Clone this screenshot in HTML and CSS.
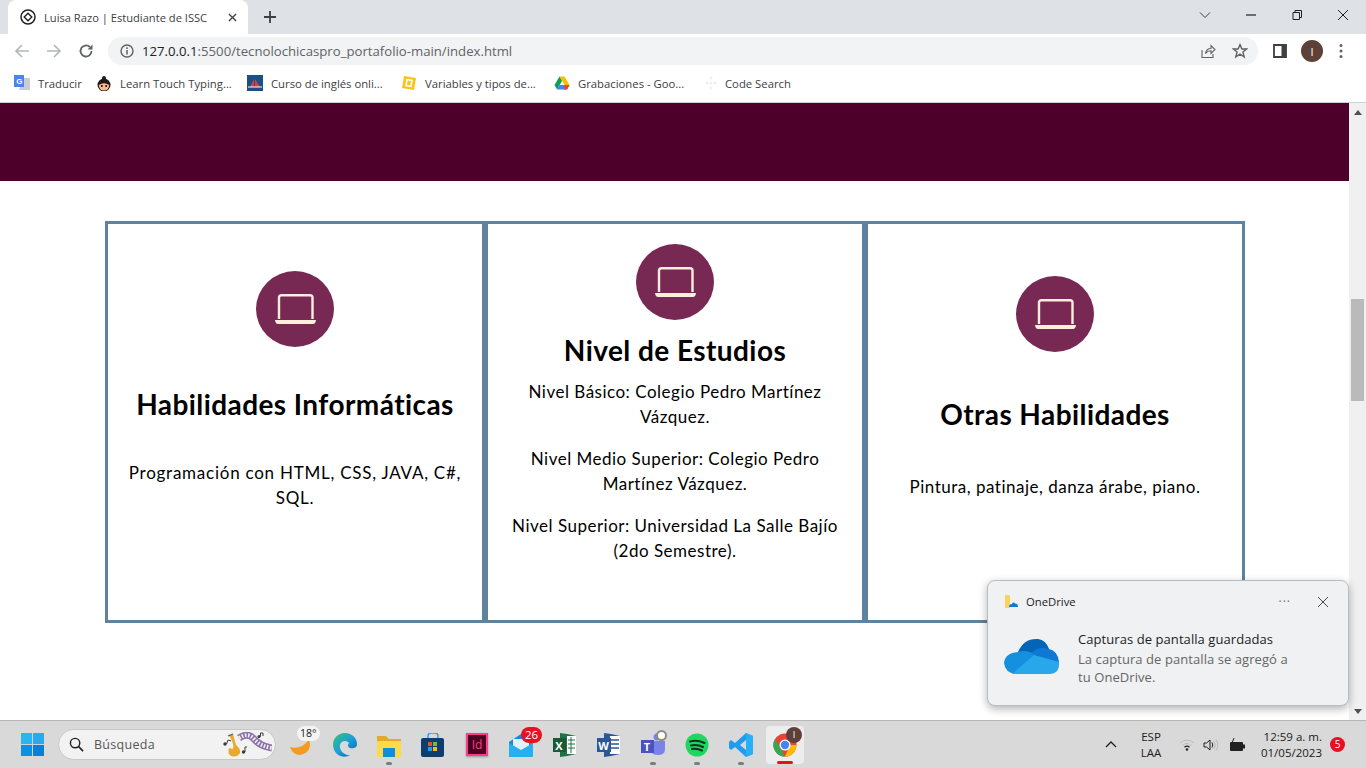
FILE: index.html
```html
<!DOCTYPE html>
<html lang="es">
<head>
<meta charset="utf-8">
<title>Luisa Razo | Estudiante de ISSC</title>
<link rel="stylesheet" href="styles.css">
</head>
<body>
<div class="tabstrip">
  <div class="tab">
    <svg class="tab-icon" viewBox="0 0 16 16"><circle cx="8" cy="8" r="7" fill="none" stroke="#202124" stroke-width="1.5"/><path d="M8 4.2 11.8 8 8 11.8 4.2 8Z" fill="none" stroke="#202124" stroke-width="1.4"/></svg>
    <span class="tab-title">Luisa Razo | Estudiante de ISSC</span>
    <svg class="tab-close" viewBox="0 0 10 10"><path d="M1 1 9 9M9 1 1 9" stroke="#45484c" stroke-width="1.6"/></svg>
  </div>
  <svg class="new-tab" viewBox="0 0 12 12"><path d="M6 0V12M0 6H12" stroke="#3c4043" stroke-width="1.8"/></svg>
  <div class="win-controls">
    <svg class="win-btn" viewBox="0 0 12 12"><path d="M1 3.5 6 8.5 11 3.5" fill="none" stroke="#3c4043" stroke-width="1"/></svg>
    <svg class="win-btn" viewBox="0 0 12 12"><path d="M1 6H11" stroke="#202124" stroke-width="1.2"/></svg>
    <svg class="win-btn" viewBox="0 0 12 12"><path d="M2 3.5H8.5V10.5H2ZM4 3.5V1.5H10.5V8.5H8.5" fill="none" stroke="#202124" stroke-width="1"/></svg>
    <svg class="win-btn" viewBox="0 0 12 12"><path d="M1 1 11 11M11 1 1 11" stroke="#202124" stroke-width="1"/></svg>
  </div>
</div>

<div class="toolbar">
  <svg class="nav-icon" viewBox="0 0 16 16"><path d="M15 8H2M8 2 2 8 8 14" fill="none" stroke="#b4b6b9" stroke-width="1.7"/></svg>
  <svg class="nav-icon" viewBox="0 0 16 16"><path d="M1 8H14M8 2 14 8 8 14" fill="none" stroke="#b4b6b9" stroke-width="1.7"/></svg>
  <svg class="nav-icon" viewBox="0 0 16 16"><path d="M13.5 8A5.5 5.5 0 1 1 11.8 4" fill="none" stroke="#5f6368" stroke-width="1.8"/><path d="M14.5 1.5V6.5H9.5Z" fill="#5f6368"/></svg>
  <div class="omnibox">
    <svg class="info-icon" viewBox="0 0 14 14"><circle cx="7" cy="7" r="6" fill="none" stroke="#5f6368" stroke-width="1.4"/><path d="M7 6V10.5M7 3.3V5" stroke="#5f6368" stroke-width="1.5"/></svg>
    <span class="url"><span class="url-host">127.0.0.1</span>:5500/tecnolochicaspro_portafolio-main/index.html</span>
    <svg class="omni-action" viewBox="0 0 16 16"><path d="M2 7V14.5H13V11M5.5 10.5C6 7.5 8 5.5 11 5.5V2.5L15 6.5 11 10.5V7.8C8.5 7.8 7 8.6 5.5 10.5Z" fill="none" stroke="#5f6368" stroke-width="1.1"/></svg>
    <svg class="omni-action star" viewBox="0 0 16 16"><path d="M8 1.6 9.9 6H14.7L10.9 9 12.2 14 8 11.2 3.8 14 5.1 9 1.3 6H6.1Z" fill="none" stroke="#5f6368" stroke-width="1.4"/></svg>
  </div>
  <svg class="side-panel" viewBox="0 0 14 14"><path d="M1 1H13V13H1Z" fill="none" stroke="#3c4043" stroke-width="1.8"/><rect x="8.5" y="1" width="4.5" height="12" fill="#3c4043"/></svg>
  <div class="avatar">I</div>
  <svg class="menu-dots" viewBox="0 0 4 16"><circle cx="2" cy="2.5" r="1.5" fill="#5f6368"/><circle cx="2" cy="8" r="1.5" fill="#5f6368"/><circle cx="2" cy="13.5" r="1.5" fill="#5f6368"/></svg>
</div>

<div class="bookmarks">
  <a class="bookmark bm-translate">
    <svg class="bm-icon" viewBox="0 0 16 16"><path d="M9 3H16V15H5Z" fill="#c9ccd1"/><rect width="10" height="12" fill="#4a86e8"/><text x="2.2" y="9" class="bm-g">G</text></svg>
    <span>Traducir</span></a>
  <a class="bookmark bm-learn">
    <svg class="bm-icon" viewBox="0 0 16 16"><circle cx="8" cy="3" r="2" fill="#1f1a17"/><circle cx="8" cy="10" r="6.5" fill="#1f1a17"/><path d="M2.8 10Q8 6.5 13.2 10 13 15.5 8 15.500 3 15.5 2.8 10Z" fill="#f5b98e"/><circle cx="5.8" cy="11" r=".9"/><circle cx="10.2" cy="11" r=".9"/></svg>
    <span>Learn Touch Typing...</span></a>
  <a class="bookmark bm-curso">
    <svg class="bm-icon" viewBox="0 0 16 16"><rect width="16" height="16" fill="#1b4f86"/><path d="M3 12 7 4V12ZM8 4 13 12H8Z" fill="#d8413f"/><path d="M1 12H15" stroke="#fff" stroke-width="1"/></svg>
    <span>Curso de inglés onli...</span></a>
  <a class="bookmark bm-vars">
    <svg class="bm-icon" viewBox="0 0 16 16"><path d="M3 1 15 3 13 15 1 13Z" fill="#fcc419"/><rect x="5.5" y="5" width="5" height="6" fill="none" stroke="#fff" stroke-width="1.6" transform="rotate(9 8 8)"/></svg>
    <span>Variables y tipos de...</span></a>
  <a class="bookmark bm-drive">
    <svg class="bm-icon" viewBox="0 0 16 16"><path d="M5.5 1.5H10.5L15.5 10H10.5Z" fill="#fbbc04"/><path d="M5.5 1.5 0.5 10 3 14.5 8 6Z" fill="#0f9d58"/><path d="M3 14.5H13L15.5 10H5.5Z" fill="#4285f4"/><path d="M10.5 10 15.5 10 13 14.5 10 14.5Z" fill="#ea4335"/></svg>
    <span>Grabaciones - Goo...</span></a>
  <a class="bookmark bm-code">
    <svg class="bm-icon" viewBox="0 0 16 16"><circle cx="8" cy="3" r="1.5" fill="#f0f0f0"/><circle cx="4" cy="8" r="1.5" fill="#f0f0f0"/><circle cx="12" cy="8" r="1.5" fill="#f0f0f0"/><circle cx="8" cy="13" r="1.5" fill="#f0f0f0"/><circle cx="8" cy="8" r="1.5" fill="#f0f0f0"/></svg>
    <span>Code Search</span></a>
</div>

<div class="viewport">
  <main class="page">
    <div class="banner"></div>
    <section class="cards">
      <article class="card card-skills">
        <div class="badge"><svg class="laptop" viewBox="0 0 41 30"><path d="M4 25V3.5Q4 1.200 6.500 1.200H35Q37.500 1.200 37.500 3.500V25" fill="none" stroke="#fdeedd" stroke-width="2.400"/><path d="M0 26H41Q40.500 30 38 30H3Q.5 30 0 26Z" fill="#fdeedd"/></svg></div>
        <h2 class="card-title">Habilidades Informáticas</h2>
        <p class="card-text">Programación con HTML, CSS, JAVA, C#, SQL.</p>
      </article>
      <article class="card card-studies">
        <div class="badge"><svg class="laptop" viewBox="0 0 41 30"><path d="M4 25V3.5Q4 1.200 6.500 1.200H35Q37.500 1.200 37.500 3.500V25" fill="none" stroke="#fdeedd" stroke-width="2.400"/><path d="M0 26H41Q40.500 30 38 30H3Q.5 30 0 26Z" fill="#fdeedd"/></svg></div>
        <h2 class="card-title">Nivel de Estudios</h2>
        <p class="card-text">Nivel Básico: Colegio Pedro Martínez Vázquez.</p>
        <p class="card-text">Nivel Medio Superior: Colegio Pedro Martínez Vázquez.</p>
        <p class="card-text">Nivel Superior: Universidad La Salle Bajío (2do Semestre).</p>
      </article>
      <article class="card card-other">
        <div class="badge"><svg class="laptop" viewBox="0 0 41 30"><path d="M4 25V3.5Q4 1.200 6.500 1.200H35Q37.500 1.200 37.500 3.500V25" fill="none" stroke="#fdeedd" stroke-width="2.400"/><path d="M0 26H41Q40.500 30 38 30H3Q.5 30 0 26Z" fill="#fdeedd"/></svg></div>
        <h2 class="card-title">Otras Habilidades</h2>
        <p class="card-text">Pintura, patinaje, danza árabe, piano.</p>
      </article>
    </section>
  </main>
  <div class="scrollbar">
    <svg class="scroll-arrow" viewBox="0 0 8 5"><path d="M0 5 4 0 8 5Z" fill="#505050"/></svg>
    <div class="scroll-thumb"></div>
    <svg class="scroll-arrow" viewBox="0 0 8 5"><path d="M0 0 4 5 8 0Z" fill="#505050"/></svg>
  </div>
</div>

<aside class="toast">
  <header class="toast-head">
    <svg class="toast-app" viewBox="0 0 14 14"><path d="M1 0H5L6 1V13H1Z" fill="#fbd35c"/><path d="M5 12Q5 9 8 9 9 6.500 11 8.500 14 8.500 14 12Z" fill="#0f78d4"/></svg>
    <span class="toast-app-name">OneDrive</span>
    <span class="toast-more">···</span>
    <svg class="toast-close" viewBox="0 0 10 10"><path d="M0 0 10 10M10 0 0 10" stroke="#4a4a4a" stroke-width="1"/></svg>
  </header>
  <div class="toast-body">
    <svg class="cloud" viewBox="0 0 56 38"><path d="M14 14Q20 0 34 1 42 2 45 11L30 26Z" fill="#0364b8"/><path d="M45 11Q54 13 55 24L38 24 26 15 33 11Q39 9 45 11Z" fill="#0f78d4"/><path d="M14 14Q24 11 30 17L38 23 12 36Q1 35 0 25 1 15 14 14Z" fill="#1490df"/><path d="M8 36 30 17 55 24Q56 36 46 36Z" fill="#28a8ea"/></svg>
    <div class="toast-copy">
      <div class="toast-title">Capturas de pantalla guardadas</div>
      <div class="toast-msg">La captura de pantalla se agregó a<br>tu OneDrive.</div>
    </div>
  </div>
</aside>

<footer class="taskbar">
  <svg class="start" viewBox="0 0 24 24"><rect width="11.500" height="11.500" fill="#29b6f0"/><rect x="12.500" width="11.500" height="11.500" fill="#29a9ee"/><rect y="12.500" width="11.500" height="11.500" fill="#0f8fe0"/><rect x="12.500" y="12.500" width="11.500" height="11.500" fill="#0b7fd6"/></svg>
  <div class="search">
    <svg class="search-icon" viewBox="0 0 16 16"><circle cx="6.500" cy="6.500" r="5" fill="none" stroke="#202020" stroke-width="1.5"/><path d="M10 10 15 15" stroke="#202020" stroke-width="1.700"/></svg>
    <span class="search-label">Búsqueda</span>
    <svg class="search-art" viewBox="0 0 50 26"><path d="M7 3 11 2 14 13Q19 17 18 21 15 26 9 24 5 21 7 16L11 17Q12 14 10.500 10Z" fill="#e8a92f"/><path d="M6 4 11 2" stroke="#555" stroke-width="1.200"/><path d="M17 6Q26 0 32 7 38 14 50 16" fill="none" stroke="#8a75a6" stroke-width="7"/><path d="M17 6Q26 0 32 7 38 14 50 16" fill="none" stroke="#f3eef8" stroke-width="4" stroke-dasharray="1.600 1.600"/><circle cx="3" cy="12" r="1.700" fill="#3a3a3a"/><path d="M4.500 12 6 8 9 9" fill="none" stroke="#3a3a3a"/><circle cx="21.500" cy="20" r="1.700" fill="#3a3a3a"/><path d="M23 20V15H25" fill="none" stroke="#3a3a3a"/><circle cx="37" cy="4.500" r="1.500" fill="#3a3a3a"/><path d="M38.500 4.500V1H41V4" fill="none" stroke="#3a3a3a"/></svg>
  </div>
  <div class="task-apps">
    <div class="app app-weather">
      <svg class="app-icon" viewBox="0 0 24 24"><path d="M1 14Q7 16 13 13 18 10 20 6 24 19 11 22 4 22 1 14Z" fill="#f39a1f"/></svg>
      <span class="weather-temp">18°</span>
    </div>
    <div class="app">
      <svg class="app-icon" viewBox="0 0 24 24"><defs><linearGradient id="edgeFill" x1="0" y1="0" x2="1" y2="1"><stop offset="0" stop-color="#35c36f"/><stop offset=".5" stop-color="#1d9fd8"/><stop offset="1" stop-color="#0c5fb2"/></linearGradient></defs><path d="M12 0C19 0 24 5 24 11 24 15 20 16 17 15 14 14 15 11 16 10 14 7 8 7 7 12 6 18 12 23 17 22 13 25 1 25 0 12 0 5 5 0 12 0Z" fill="url(#edgeFill)"/></svg>
    </div>
    <div class="app app-open">
      <svg class="app-icon" viewBox="0 0 24 24"><path d="M0 3H9L12 6H24V8H0Z" fill="#e3a92b"/><path d="M0 8H24V24H0Z" fill="#fdd94e"/><rect x="6" y="15" width="12" height="9" fill="#0f8edb"/></svg>
      <span class="run-dot"></span>
    </div>
    <div class="app">
      <svg class="app-icon" viewBox="0 0 24 24"><path d="M7 6V3Q7 0 10 0H14Q17 0 17 3V6" fill="none" stroke="#29a4e8" stroke-width="1.500"/><rect y="5" width="23" height="19" rx="2" fill="#0c3f70"/><rect x="7" y="9" width="4" height="4" fill="#e8512b"/><rect x="12" y="9" width="4" height="4" fill="#7fba2a"/><rect x="7" y="14" width="4" height="4" fill="#1ea0e8"/><rect x="12" y="14" width="4" height="4" fill="#fcb912"/></svg>
    </div>
    <div class="app">
      <div class="indesign"><span class="indesign-text">Id</span></div>
    </div>
    <div class="app">
      <svg class="app-icon" viewBox="0 0 24 24"><path d="M0 9 12 1 24 9V24H0Z" fill="#1a8ad6"/><path d="M4 6H20V16L12 20 4 16Z" fill="#dff2fd"/><path d="M0 10 12 17 24 10V24H0Z" fill="#29aef0"/></svg>
      <span class="count-badge">26</span>
    </div>
    <div class="app">
      <svg class="app-icon" viewBox="0 0 24 24"><path d="M7 0 14 1 23 3V21L14 23 7 24Z" fill="#1f7244"/><path d="M14 3H23V21H14Z" fill="#fff"/><path d="M15 7H22M15 11H22M15 15H22M18 4V20" stroke="#1f7244" stroke-width="1"/><rect y="5" width="13" height="14" fill="#185c37"/><text x="2.300" y="16.500" class="office-letter">X</text></svg>
    </div>
    <div class="app">
      <svg class="app-icon" viewBox="0 0 24 24"><path d="M7 0 14 1 23 3V21L14 23 7 24Z" fill="#2b579a"/><path d="M13 3H23V21H13Z" fill="#fff"/><path d="M14 7H22M14 11H22M14 15H22" stroke="#2b579a" stroke-width="1.300"/><rect y="5" width="14" height="14" fill="#2b579a"/><text x="1.300" y="16.500" class="office-letter">W</text></svg>
    </div>
    <div class="app app-open">
      <svg class="app-icon" viewBox="0 0 24 24"><circle cx="16" cy="4" r="3.500" fill="#7b83eb"/><path d="M9 8H24V16Q24 22 17 22 10 22 9 16Z" fill="#7b83eb"/><rect y="7" width="13" height="13" fill="#4b53bc"/><text x="2.800" y="17.500" class="office-letter">T</text></svg>
      <span class="presence"></span>
      <span class="run-dot"></span>
    </div>
    <div class="app app-open">
      <svg class="app-icon" viewBox="0 0 24 24"><circle cx="12" cy="12" r="11.500" fill="#1ed760"/><path d="M5 8.500Q12 6.500 19.500 10M6 12.500Q12 11 18 14M7 16Q12 15 17 17.500" fill="none" stroke="#17301f" stroke-width="2" stroke-linecap="round"/></svg>
      <span class="run-dot"></span>
    </div>
    <div class="app app-open">
      <svg class="app-icon" viewBox="0 0 24 24"><path d="M17 0 24 3V21L17 24 6 14 2 17 0 15V9L2 7 6 10ZM17 7 11 12 17 17Z" fill="#1f9cf0"/><path d="M17 0 24 3V21L17 24Z" fill="#27b0f5"/></svg>
      <span class="run-dot"></span>
    </div>
    <div class="app app-active">
      <svg class="app-icon" viewBox="0 0 24 24"><circle cx="12" cy="12" r="11.500" fill="#ea4335"/><path d="M12 23.500A11.500 11.500 0 0 1 2 6L8 16Z" fill="#34a853"/><path d="M23.500 12A11.500 11.500 0 0 1 12 23.500L17 12Z" fill="#fbbc04"/><circle cx="12" cy="12" r="5.500" fill="#fff"/><circle cx="12" cy="12" r="4.200" fill="#4285f4"/></svg>
      <span class="chrome-avatar">I</span>
      <span class="run-bar"></span>
    </div>
  </div>
  <div class="tray">
    <svg class="tray-chevron" viewBox="0 0 12 7"><path d="M1 6 6 1 11 6" fill="none" stroke="#202020" stroke-width="1.300"/></svg>
    <div class="lang"><span>ESP</span><span>LAA</span></div>
    <svg class="tray-icon" viewBox="0 0 16 12"><path d="M1 4Q8 -2 15 4M3.500 6.500Q8 2.500 12.500 6.500" fill="none" stroke="#bdbdbd" stroke-width="1"/><path d="M5.500 8.200Q8 6 10.500 8.200" fill="none" stroke="#202020" stroke-width="1.200"/><circle cx="8" cy="10.500" r="1.200" fill="#202020"/></svg>
    <svg class="tray-icon tray-sound" viewBox="0 0 16 14"><path d="M1 5H3.500L7 2V12L3.500 9H1Z" fill="none" stroke="#202020" stroke-width="1"/><path d="M9 4.500Q10.500 7 9 9.500" fill="none" stroke="#202020" stroke-width="1"/><path d="M11 3Q13.500 7 11 11M13 1.500Q16.500 7 13 12.500" fill="none" stroke="#bdbdbd" stroke-width="1"/></svg>
    <svg class="tray-icon tray-battery" viewBox="0 0 16 14"><rect x="1" y="4" width="13" height="9" rx="1" fill="#202020"/><rect x="14" y="6.500" width="2" height="4" fill="#202020"/><path d="M5 0 3 5H6L4 9" fill="none" stroke="#202020" stroke-width="1"/></svg>
    <div class="clock"><span>12:59 a. m.</span><span>01/05/2023</span></div>
    <span class="notif-count">5</span>
  </div>
</footer>
</body>
</html>
```
FILE: styles.css
```css
* { box-sizing: border-box; }
html, body { margin: 0; height: 768px; overflow: hidden; }
body {
  width: 1366px;
  display: flex;
  flex-direction: column;
  position: relative;
  font-family: "Open Sans", "Noto Sans", sans-serif;
  color: #202124;
  background: #fff;
}
svg { display: block; flex: none; }

/* tab strip */
.tabstrip { height: 34px; flex: none; background: #dee1e6; display: flex; align-items: center; padding-left: 8px; }
.tab { width: 240px; height: 34px; align-self: flex-end; background: #fff; border-radius: 8px 8px 0 0; display: flex; align-items: center; padding: 0 11px 0 12px; }
.tab-icon { width: 16px; height: 16px; }
.tab-title { font-size: 11.150px; margin-left: 8px; flex: 1; white-space: nowrap; color: #3c4043; }
.tab-close { width: 9px; height: 9px; }
.new-tab { width: 12px; height: 12px; margin-left: 16px; }
.win-controls { margin-left: auto; display: flex; align-items: center; align-self: flex-start; padding-top: 9px; padding-right: 17px; gap: 34px; }
.win-btn { width: 12px; height: 12px; }

/* toolbar */
.toolbar { height: 34px; flex: none; background: #fff; display: flex; align-items: center; padding-left: 14px; }
.nav-icon { width: 16px; height: 16px; margin-right: 16px; }
.nav-icon:nth-of-type(3) { margin-right: 14px; }
.omnibox { width: 1150px; height: 28px; background: #f1f3f4; border-radius: 14px; display: flex; align-items: center; padding: 0 10px 0 12px; }
.info-icon { width: 14px; height: 14px; }
.url { font-size: 13.180px; margin-left: 8px; flex: 1; color: #5f6368; white-space: nowrap; }
.url-host { color: #202124; }
.omni-action { width: 16px; height: 16px; margin-left: 16px; }
.star { margin-left: 16px; }
.side-panel { width: 14px; height: 14px; margin-left: 15px; }
.avatar { width: 22px; height: 22px; border-radius: 50%; background: #5d4037; color: #fff; font-size: 11px; display: flex; align-items: center; justify-content: center; margin-left: 14px; }
.menu-dots { width: 4px; height: 16px; margin-left: 16px; }

/* bookmarks */
.bookmarks { height: 35px; flex: none; background: #fff; border-bottom: 1px solid #cfd1d4; display: flex; align-items: center; padding: 0 0 4px 14px; }
.bookmark { display: flex; align-items: center; font-size: 11.300px; color: #3c4043; white-space: nowrap; }
.bm-icon { width: 16px; height: 16px; margin-right: 8px; }
.bm-translate { width: 82px; }
.bm-learn { width: 151px; }
.bm-curso { width: 154px; }
.bm-vars { width: 153px; }
.bm-drive { width: 149px; }
.bm-code .bm-icon { margin-right: 6px; }
.bm-g { font-size: 8px; font-weight: 700; fill: #fff; font-family: "Liberation Sans", sans-serif; }

/* page */
.viewport { height: 617px; flex: none; display: flex; }
.page { flex: 1; min-width: 0; background: #fff; }
.banner { height: 78px; background: #4d0029; }
.cards { display: grid; grid-template-columns: repeat(3, 380px); justify-content: center; margin-top: 40px; padding-left: 1px; }
.card {
  height: 402px;
  border: 3px solid #5f829e;
  display: flex;
  flex-direction: column;
  align-items: center;
  text-align: center;
  padding-left: 16px;
  padding-right: 16px;
  color: #000;
  font-family: "Lato", "Open Sans", sans-serif;
}
.badge { width: 78px; height: 76px; flex: none; border-radius: 50%; background: #772953; display: flex; align-items: center; justify-content: center; }
.laptop { width: 41px; height: 30px; }
.card-title { margin: 0; font-size: 28px; line-height: 34px; font-weight: 700; letter-spacing: .43px; white-space: nowrap; }
.card-text { margin: 0; font-size: 17px; line-height: 25px; letter-spacing: .5px; }
.card-skills { padding-top: 47px; }
.card-skills .card-title { margin-top: 40px; }
.card-skills .card-text { margin-top: 39px; letter-spacing: .75px; }
.card-studies { padding-top: 20px; }
.card-studies .card-title { margin-top: 13px; }
.card-studies .card-text { margin-top: 12px; }
.card-studies .card-text + .card-text { margin-top: 17px; }
.card-other { padding-top: 52px; }
.card-other .card-title { margin-top: 45px; }
.card-other .card-text { margin-top: 43px; }

/* scrollbar */
.scrollbar { width: 17px; flex: none; background: #f0f0f0; position: relative; display: flex; flex-direction: column; justify-content: space-between; align-items: center; padding: 7px 0 6px; }
.scroll-arrow { width: 8px; height: 5px; }
.scroll-thumb { position: absolute; left: 2px; top: 196px; width: 13px; height: 102px; background: #bababa; }

/* notification */
.toast { position: absolute; left: 987px; top: 580px; width: 362px; height: 126px; background: #f0f1f3; border: 1px solid #b4bcc4; border-radius: 8px; box-shadow: 0 3px 8px rgba(0,0,0,.3); padding: 0 20px 0 16px; }
.toast-head { height: 41px; display: flex; align-items: center; }
.toast-app { width: 14px; height: 14px; }
.toast-app-name { font-size: 11.300px; margin-left: 8px; color: #1c1c1c; }
.toast-more { margin-left: auto; font-size: 12px; color: #707070; letter-spacing: 1px; }
.toast-close { width: 10px; height: 10px; margin-left: 27px; }
.toast-body { display: flex; align-items: flex-start; }
.cloud { width: 56px; height: 38px; margin-top: 16px; }
.toast-copy { margin-left: 18px; font-size: 13px; line-height: 18px; margin-top: 7px; letter-spacing: .07px; }
.toast-title { color: #1c1c1c; line-height: 20px; }
.toast-msg { color: #666; margin-top: 1px; }

/* taskbar */
.taskbar { height: 48px; flex: none; background: #d9d9d9; border-top: 1px solid #b6b6b6; display: flex; align-items: center; padding-left: 21px; }
.start { width: 23px; height: 23px; }
.search { width: 218px; height: 31px; margin-left: 14px; background: #f2f2f2; border-radius: 16px; border: 1px solid #c8c8c8; display: flex; align-items: center; padding: 0 3px 0 10px; }
.search-icon { width: 15px; height: 15px; }
.search-label { font-size: 12.500px; margin-left: 10px; color: #555; flex: 1; letter-spacing: .3px; }
.search-art { width: 50px; height: 26px; }
.task-apps { display: flex; align-items: center; margin-left: 3px; }
.app { width: 44px; height: 38px; display: flex; align-items: center; justify-content: center; position: relative; }
.app-icon { width: 24px; height: 24px; }
.app-active { width: 38px; margin: 0 3px; background: #ededed; border-radius: 4px; }
.weather-temp { position: absolute; left: 18px; top: 0; background: #f4f4f4; border-radius: 8px; padding: 0 3px; font-size: 10.500px; line-height: 15px; color: #202020; }
.run-dot { position: absolute; left: 19px; bottom: -1px; width: 6px; height: 3px; background: #7d7d7d; border-radius: 2px; }
.run-bar { position: absolute; left: 11px; bottom: 0; width: 16px; height: 3px; background: #e81123; border-radius: 2px; }
.indesign { width: 22px; height: 23px; background: #49021f; border: 2px solid #ff3a8c; display: flex; align-items: center; justify-content: center; box-shadow: 0 1px 2px rgba(0,0,0,.3); }
.indesign-text { color: #ff3a8c; font-size: 12px; line-height: 1; }
.count-badge { position: absolute; left: 22px; top: 1px; min-width: 21px; height: 16px; padding: 0 3px; border-radius: 8px; background: #e81123; color: #fff; font-size: 11.500px; line-height: 16px; text-align: center; }
.office-letter { font-size: 11px; font-weight: 700; fill: #fff; font-family: "Open Sans", sans-serif; }
.presence { position: absolute; left: 25px; top: 4px; width: 11px; height: 11px; border-radius: 50%; background: #fff; border: 2px solid #8a8a8a; }
.chrome-avatar { position: absolute; left: 20px; top: 1px; width: 16px; height: 16px; border-radius: 50%; background: #5d4037; color: #fff; font-size: 9px; line-height: 16px; text-align: center; }
.tray { margin-left: auto; display: flex; align-items: center; padding-right: 21px; }
.tray-chevron { width: 12px; height: 7px; }
.lang { display: flex; flex-direction: column; align-items: center; font-size: 11.500px; line-height: 16px; margin-left: 19px; width: 30px; color: #202020; }
.tray-icon { width: 16px; height: 14px; }
.lang + .tray-icon { margin-left: 13px; }
.tray-sound { margin-left: 8px; }
.tray-battery { margin-left: 10px; }
.clock { display: flex; flex-direction: column; align-items: flex-end; font-size: 11.500px; line-height: 16px; margin-left: 13px; width: 64px; color: #202020; white-space: nowrap; }
.notif-count { width: 15px; height: 15px; border-radius: 50%; background: #e81123; color: #fff; font-size: 10px; line-height: 15px; text-align: center; margin-left: 8px; }
```
